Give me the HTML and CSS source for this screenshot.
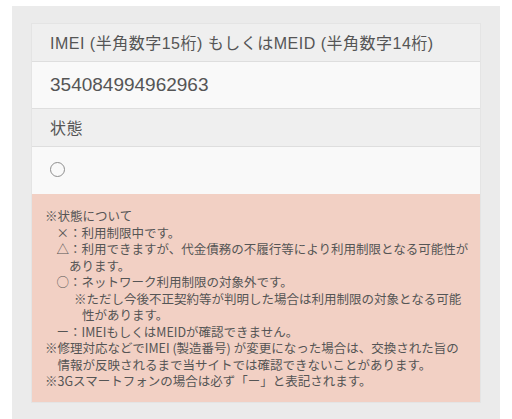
FILE: index.html
```html
<!DOCTYPE html>
<html lang="ja">
<head>
<meta charset="utf-8">
<link rel="stylesheet" href="styles.css">
</head>
<body>
<div class="outer">
  <div class="card">
    <div class="row head">IMEI (半角数字15桁) もしくはMEID (半角数字14桁)</div>
    <div class="row value num">354084994962963</div>
    <div class="row head">状態</div>
    <div class="row value last"><span class="circle"></span></div>
    <div class="note">
      <p class="l0">※状態について</p>
      <p class="l1">×：利用制限中です。</p>
      <p class="l1">△：利用できますが、代金債務の不履行等により利用制限となる可能性があります。</p>
      <p class="l1">○：ネットワーク利用制限の対象外です。</p>
      <p class="l2">※ただし今後不正契約等が判明した場合は利用制限の対象となる可能性があります。</p>
      <p class="l1">ー：IMEIもしくはMEIDが確認できません。</p>
      <p class="l0 hang">※修理対応などでIMEI (製造番号) が変更になった場合は、交換された旨の情報が反映されるまで当サイトでは確認できないことがあります。</p>
      <p class="l0">※3Gスマートフォンの場合は必ず「ー」と表記されます。</p>
    </div>
  </div>
</div>
</body>
</html>
```
FILE: styles.css
```css
html, body {
  margin: 0;
  padding: 0;
  background: #ffffff;
}
body {
  padding: 6px 12px 1px 12px;
  font-family: "Liberation Sans", "Noto Sans CJK JP", sans-serif;
  color: #555555;
}
.outer {
  width: 488px;
  box-sizing: border-box;
  background: #ebebeb;
  padding: 18px 20px 17px 20px;
}
.card {
  background: #f9f9f9;
  box-shadow: 0 0 0 1px #e4e4e4;
}
.row {
  box-sizing: border-box;
  padding-left: 18px;
  border-bottom: 1px solid #dedede;
}
.head {
  background: #efefef;
  font-size: 16px;
  letter-spacing: 0.5px;
  line-height: 21px;
  padding-top: 9px;
  height: 38px;
}
.value {
  background: #f9f9f9;
  height: 47px;
  font-size: 19px;
  line-height: 26px;
  display: flex;
  align-items: center;
}
.last {
  border-bottom: none;
}
.circle {
  display: inline-block;
  width: 13px;
  height: 13px;
  border: 1px solid #8e8e8e;
  border-radius: 50%;
  margin-top: -2px;
}
.note {
  background: #f2d0c4;
  padding: 14px 9px 12px 13px;
  font-family: "Noto Sans CJK JP", sans-serif;
  font-size: 12.5px;
  line-height: 16.5px;
  color: #555555;
}
.note p {
  margin: 0;
}
.l1 {
  padding-left: 24px;
  text-indent: -12.5px;
}
.l2 {
  padding-left: 37px;
  text-indent: -8px;
}
.hang {
  padding-left: 12.5px;
  text-indent: -12.5px;
}
```
